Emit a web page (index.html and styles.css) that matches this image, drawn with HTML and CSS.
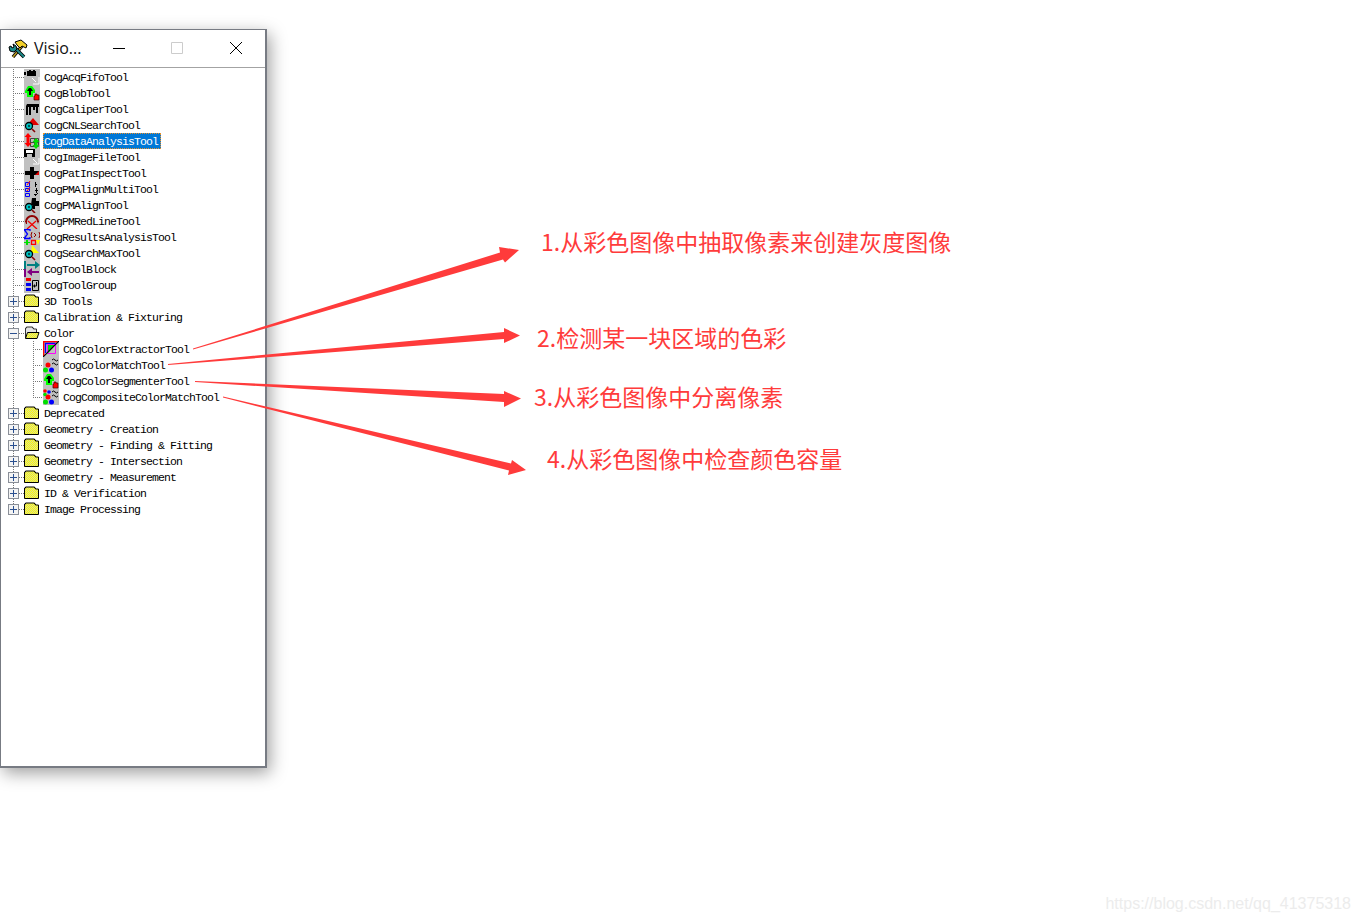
FILE: index.html
```html
<!DOCTYPE html>
<html lang="zh-CN">
<head>
  <meta charset="UTF-8" />
  <title>VisionPro Toolbox</title>
  <link rel="stylesheet" href="styles.css">
</head>
<body>
  <!-- Icon sheet -->
  <svg class="sheet" width="0" height="0">
    <defs>
      <pattern id="dither" width="2" height="2" patternUnits="userSpaceOnUse">
        <rect width="2" height="2" fill="#ffff00"/>
        <rect width="1" height="1" fill="#d8d8a0"/>
        <rect x="1" y="1" width="1" height="1" fill="#d8d8a0"/>
      </pattern>
      <symbol id="i-folder" viewBox="0 0 16 16">
        <path d="M.500 4V3h1V2h9v1h1v1h3v9.500H.500z" fill="url(#dither)" stroke="#000"/>
      </symbol>
      <symbol id="i-open" viewBox="0 0 16 16">
        <path d="M1.500 13V3h1V2h6v1h1v1h3v3" fill="#e4e4e4" stroke="#333"/>
        <path d="M1.500 13.500l2-6h11.500l-2 6z" fill="url(#dither)" stroke="#000"/>
      </symbol>
      <symbol id="i-acq" viewBox="0 0 16 16">
        <rect x="0" y="3" width="2" height="3" fill="#000"/>
        <rect x="3" y="2" width="9" height="5" fill="#000"/>
        <rect x="5" y="1" width="2" height="1" fill="#000"/>
        <rect x="9" y="1" width="2" height="1" fill="#000"/>
        <path d="M8 9l4 4M15 8v7H9" fill="none" stroke="#fff"/>
      </symbol>
      <symbol id="i-blob" viewBox="0 0 16 16">
        <path d="M1 6l3-5h4l3 4v3H9v4H3V8H1z" fill="#00ff00"/>
        <path d="M3 6l2-3h2l2 3H7v4H5V6z" fill="#000"/>
        <path d="M11 9h2v1h2v5h-5v-4h1z" fill="#f00" stroke="#400" stroke-width=".7"/>
      </symbol>
      <symbol id="i-caliper" viewBox="0 0 16 16">
        <path d="M3 3h12v3h-1v6h-2V6h-1v3H9V6H7v8H5V6H4v8H2V5z" fill="#000"/>
      </symbol>
      <symbol id="i-cnl" viewBox="0 0 16 16">
        <path d="M4 7l5-6 6 7H9z" fill="#e00000"/>
        <circle cx="5" cy="9" r="3.500" fill="#00c8c8" stroke="#000" stroke-width="1.300"/>
        <path d="M8 12l3 3" stroke="#800" stroke-width="1.600"/>
        <circle cx="5" cy="9" r="1.200" fill="#005050"/>
      </symbol>
      <symbol id="i-data" viewBox="0 0 16 16">
        <path d="M6.500 5.500h8v8h-8zM6.500 9.500h8M10.500 5.500v8" fill="none" stroke="#444"/>
        <path d="M4 0l3.500 4H5.500v6H7.500L4 14 .500 10H2.500V4H.500z" fill="#f00"/>
        <path d="M12 5l3.500 4H13.500v3h2L12 16 8.500 12h2V9h-2z" fill="#00e000"/>
      </symbol>
      <symbol id="i-file" viewBox="0 0 16 16">
        <path d="M0 0h11v8H0z" fill="#000"/>
        <rect x="2" y="1" width="7" height="3" fill="#fff"/>
        <rect x="3" y="5" width="5" height="3" fill="#c0c0c0"/>
        <path d="M9 10l4 4M15 9v6H9" fill="none" stroke="#fff"/>
      </symbol>
      <symbol id="i-pat" viewBox="0 0 16 16">
        <path d="M6 2h4v4h5v4h-5v4H6v-4H1V6h5z" fill="#000"/>
        <path d="M15 6v4h-4z" fill="#e00000"/>
      </symbol>
      <symbol id="i-multi" viewBox="0 0 16 16">
        <path d="M1.500 1.500h4v4h-4zM1.500 7.500h4v3h-4zM1.500 12.500h4v3h-4z" fill="none" stroke="#00f"/>
        <path d="M3 4l3-4M3 10l3-4" stroke="#f00"/>
        <path d="M11 3h2v1h-2zM11 1h1v5h-1zM11 9h3v1h-3zM12 7h1v5h-1zM10 13h3v1h-3z" fill="#000"/>
        <path d="M11 15l3-3" stroke="#000"/>
      </symbol>
      <symbol id="i-pm" viewBox="0 0 16 16">
        <circle cx="5" cy="10" r="3.500" fill="#00d0d0" stroke="#000" stroke-width="1.300"/>
        <path d="M8 13l3 3" stroke="#800" stroke-width="1.600"/>
        <path d="M8 1h4v3h3v5h-4v3H9V8H7z" fill="#000"/>
        <circle cx="5" cy="10" r="1.200" fill="#005050"/>
      </symbol>
      <symbol id="i-red" viewBox="0 0 16 16">
        <path d="M2 9a6 6 0 1 1 12 0" fill="none" stroke="#900000" stroke-width="2"/>
        <path d="M3 16L12 8M4 8l9 8" stroke="#f00000" stroke-width="1.300"/>
        <path d="M1 8h2v3h-1zM13 8h2l-1 3z" fill="#900000"/>
      </symbol>
      <symbol id="i-results" viewBox="0 0 16 16">
        <path d="M6 2V.500H.500v.500l3 4-3 4v.500H6V8" fill="none" stroke="#00f" stroke-width="1.300"/>
        <path d="M8 3L7 6l1 3M15 3l1 3-1 3M10 4l2 2-2 2" fill="none" stroke="#900000"/>
        <path d="M2 11h2v2h2v1H4v2H2v-2H0v-1h2z" fill="#00e000"/>
        <path d="M7.500 11.500h4v4h-4z" fill="none" stroke="#f00" stroke-width="1.300"/>
        <path d="M12 11h4l-2 5z" fill="#ff0"/>
      </symbol>
      <symbol id="i-max" viewBox="0 0 16 16">
        <path d="M8 0l7 8H7z" fill="#ff0"/>
        <circle cx="5" cy="9" r="3.500" fill="#00c8c8" stroke="#000" stroke-width="1.300"/>
        <path d="M8 12l3 3" stroke="#800" stroke-width="1.600"/>
        <circle cx="5" cy="9" r="1.200" fill="#005050"/>
      </symbol>
      <symbol id="i-block" viewBox="0 0 16 16">
        <rect x="0" y="0" width="2" height="8" fill="#008080"/>
        <path d="M3 3h8V0l5 4-5 4V5H3z" fill="#008080"/>
        <rect x="0" y="8" width="2" height="8" fill="#800080"/>
        <path d="M15 10H8V7l-5 4 5 4v-3h7z" fill="#800080"/>
      </symbol>
      <symbol id="i-group" viewBox="0 0 16 16">
        <rect x="2" y="1" width="5" height="3" fill="#f00000"/>
        <rect x="2" y="6" width="5" height="3" fill="#0000f0"/>
        <rect x="2" y="11" width="5" height="3" fill="#0000f0"/>
        <path d="M8.500 3.500h6v10h-6zM12.500 5v4H10" fill="none" stroke="#000"/>
        <path d="M11 7v4L9 9z" fill="#000"/>
      </symbol>
      <symbol id="i-extract" viewBox="0 0 16 16">
        <path d="M.700 15V.700h14" fill="none" stroke="#f00" stroke-width="1.400"/>
        <path d="M2.500 12V2.500h10" fill="none" stroke="#00f" stroke-width="1.400"/>
        <path d="M4.500 3.500h8v9h-8z" fill="#c0c0c0" stroke="#f0f"/>
        <path d="M5 12L12 4H5z" fill="#00e000"/>
        <path d="M0 16L16 0" stroke="#000" stroke-width="1.200"/>
      </symbol>
      <symbol id="i-match" viewBox="0 0 16 16">
        <path d="M9 3q1.500-2 3 0t3 0M9 7q1.500-2 3 0t3 0" fill="none" stroke="#000"/>
        <circle cx="5" cy="8" r="2.500" fill="#f00"/>
        <circle cx="2.500" cy="13" r="2.500" fill="#00e000"/>
        <circle cx="8.500" cy="13" r="2.500" fill="#00f"/>
      </symbol>
      <symbol id="i-seg" viewBox="0 0 16 16">
        <path d="M1 6l3-5h4l3 4v3H9v4H3V8H1z" fill="#00ff00"/>
        <path d="M3 6l2-3h2l2 3H7v4H5V6z" fill="#000"/>
        <path d="M11 9h2v1h2v5h-5v-4h1z" fill="#f00" stroke="#400" stroke-width=".7"/>
      </symbol>
      <symbol id="i-comp" viewBox="0 0 16 16">
        <circle cx="2" cy="2" r="1.800" fill="#f00"/>
        <circle cx="6" cy="3" r="1.800" fill="#00f"/>
        <circle cx="2" cy="5.500" r="1.800" fill="#00e000"/>
        <path d="M9 3q1.500-2 3 0t3 0M9 7q1.500-2 3 0t3 0" fill="none" stroke="#000"/>
        <circle cx="5" cy="8" r="2.500" fill="#f00"/>
        <circle cx="2.500" cy="13" r="2.500" fill="#00e000"/>
        <circle cx="8.500" cy="13" r="2.500" fill="#00f"/>
      </symbol>
    </defs>
  </svg>

  <!-- Tool window -->
  <div class="window">
    <div class="titlebar">
      <svg class="app-icon" width="20" height="20" viewBox="0 0 20 20">
        <path d="M5 18L14 7" stroke="#000" stroke-width="3.400"/>
        <path d="M5 18L14 7" stroke="#b89a20" stroke-width="1.600"/>
        <path d="M7 3l6-2 6 5-1 3-4-2-2 2-3-3z" fill="#f2cf2a" stroke="#000" stroke-width="1"/>
        <path d="M16 18L6 8" stroke="#000" stroke-width="3.600"/>
        <path d="M16 18L6 8" stroke="#1c8c8c" stroke-width="1.800"/>
        <path d="M1 8l2-1 1 2 2-1-1-3 3 2 1 3-3 3-4-1z" fill="#1c8c8c" stroke="#000" stroke-width="1"/>
      </svg>
      <span class="app-name">Visio...</span>
      <div class="win-buttons">
        <span class="win-btn"><svg width="14" height="14" viewBox="0 0 14 14"><path d="M1 6.500h12" stroke="#000"/></svg></span>
        <span class="win-btn"><svg width="14" height="14" viewBox="0 0 14 14"><path d="M1.500 .500h11v11h-11z" fill="none" stroke="#ccc"/></svg></span>
        <span class="win-btn"><svg width="14" height="14" viewBox="0 0 14 14"><path d="M1 0l12 12M13 0L1 12" stroke="#000"/></svg></span>
      </div>
    </div>

    <div class="tree">
      <div class="row"><span class="gut leaf"></span><svg class="ico tool"><use href="#i-acq"/></svg><span class="label">CogAcqFifoTool</span></div>
      <div class="row"><span class="gut leaf"></span><svg class="ico tool"><use href="#i-blob"/></svg><span class="label">CogBlobTool</span></div>
      <div class="row"><span class="gut leaf"></span><svg class="ico tool"><use href="#i-caliper"/></svg><span class="label">CogCaliperTool</span></div>
      <div class="row"><span class="gut leaf"></span><svg class="ico tool"><use href="#i-cnl"/></svg><span class="label">CogCNLSearchTool</span></div>
      <div class="row"><span class="gut leaf"></span><svg class="ico tool"><use href="#i-data"/></svg><span class="label selected">CogDataAnalysisTool</span></div>
      <div class="row"><span class="gut leaf"></span><svg class="ico tool"><use href="#i-file"/></svg><span class="label">CogImageFileTool</span></div>
      <div class="row"><span class="gut leaf"></span><svg class="ico tool"><use href="#i-pat"/></svg><span class="label">CogPatInspectTool</span></div>
      <div class="row"><span class="gut leaf"></span><svg class="ico tool"><use href="#i-multi"/></svg><span class="label">CogPMAlignMultiTool</span></div>
      <div class="row"><span class="gut leaf"></span><svg class="ico tool"><use href="#i-pm"/></svg><span class="label">CogPMAlignTool</span></div>
      <div class="row"><span class="gut leaf"></span><svg class="ico tool"><use href="#i-red"/></svg><span class="label">CogPMRedLineTool</span></div>
      <div class="row"><span class="gut leaf"></span><svg class="ico tool"><use href="#i-results"/></svg><span class="label">CogResultsAnalysisTool</span></div>
      <div class="row"><span class="gut leaf"></span><svg class="ico tool"><use href="#i-max"/></svg><span class="label">CogSearchMaxTool</span></div>
      <div class="row"><span class="gut leaf"></span><svg class="ico tool"><use href="#i-block"/></svg><span class="label">CogToolBlock</span></div>
      <div class="row"><span class="gut leaf"></span><svg class="ico tool"><use href="#i-group"/></svg><span class="label">CogToolGroup</span></div>

      <div class="row"><span class="gut leaf"><span class="box plus"></span></span><svg class="ico"><use href="#i-folder"/></svg><span class="label">3D Tools</span></div>
      <div class="row"><span class="gut leaf"><span class="box plus"></span></span><svg class="ico"><use href="#i-folder"/></svg><span class="label">Calibration &amp; Fixturing</span></div>
      <div class="row"><span class="gut leaf"><span class="box"></span></span><svg class="ico"><use href="#i-open"/></svg><span class="label">Color</span></div>

      <!-- Color group children -->
      <div class="row"><span class="gut pass"></span><span class="gut2"></span><svg class="ico tool"><use href="#i-extract"/></svg><span class="label">CogColorExtractorTool</span></div>
      <div class="row"><span class="gut pass"></span><span class="gut2"></span><svg class="ico tool"><use href="#i-match"/></svg><span class="label">CogColorMatchTool</span></div>
      <div class="row"><span class="gut pass"></span><span class="gut2"></span><svg class="ico tool"><use href="#i-seg"/></svg><span class="label">CogColorSegmenterTool</span></div>
      <div class="row"><span class="gut pass"></span><span class="gut2 end"></span><svg class="ico tool"><use href="#i-comp"/></svg><span class="label">CogCompositeColorMatchTool</span></div>

      <div class="row"><span class="gut leaf"><span class="box plus"></span></span><svg class="ico"><use href="#i-folder"/></svg><span class="label">Deprecated</span></div>
      <div class="row"><span class="gut leaf"><span class="box plus"></span></span><svg class="ico"><use href="#i-folder"/></svg><span class="label">Geometry - Creation</span></div>
      <div class="row"><span class="gut leaf"><span class="box plus"></span></span><svg class="ico"><use href="#i-folder"/></svg><span class="label">Geometry - Finding &amp; Fitting</span></div>
      <div class="row"><span class="gut leaf"><span class="box plus"></span></span><svg class="ico"><use href="#i-folder"/></svg><span class="label">Geometry - Intersection</span></div>
      <div class="row"><span class="gut leaf"><span class="box plus"></span></span><svg class="ico"><use href="#i-folder"/></svg><span class="label">Geometry - Measurement</span></div>
      <div class="row"><span class="gut leaf"><span class="box plus"></span></span><svg class="ico"><use href="#i-folder"/></svg><span class="label">ID &amp; Verification</span></div>
      <div class="row"><span class="gut leaf last"><span class="box plus"></span></span><svg class="ico"><use href="#i-folder"/></svg><span class="label">Image Processing</span></div>
    </div>
  </div>

  <!-- Annotations drawn over the screenshot -->
  <svg class="arrows" width="1360" height="922" viewBox="0 0 1360 922">
    <polygon points="193,348.600 500,252.500 499,247 519,250 505,262.500 503,259.500 193,349.600"/>
    <polygon points="168,364 504,332 504,328 520,335.500 504,343 504,339 168,365"/>
    <polygon points="195,381 504,394 504,391 521,398.500 504,407 504,402 195,382"/>
    <polygon points="223,396.500 511,463.500 512,460 526,470 508,475 509,470.500 223,397.500"/>
  </svg>
  <div class="note note-1">1.从彩色图像中抽取像素来创建灰度图像</div>
  <div class="note note-2">2.检测某一块区域的色彩</div>
  <div class="note note-3">3.从彩色图像中分离像素</div>
  <div class="note note-4">4.从彩色图像中检查颜色容量</div>

  <div class="watermark">https://blog.csdn.net/qq_41375318</div>
</body>
</html>
```

FILE: styles.css
```css
/* General styles */
body {
  margin: 0;
  height: 922px;
  overflow: hidden;
  background-color: #fff;
  position: relative;
}
.sheet {
  position: absolute;
}
/* Tool window */
.window {
  box-sizing: border-box;
  width: 267px;
  height: 739px;
  margin-top: 29px;
  background-color: #fff;
  border: solid #777b83;
  border-width: 1px 2px 2px 1px;
  box-shadow: 3px 5px 16px rgba(0, 0, 0, 0.38);
}
.titlebar {
  display: flex;
  align-items: center;
  height: 37px;
  padding-left: 7px;
  border-bottom: 1px solid #a3a3a3;
}
.app-icon {
  flex: none;
}
.app-name {
  margin-left: 6px;
  margin-bottom: 2px;
  font-family: "Open Sans", sans-serif;
  font-size: 16px;
  color: #111;
}
.win-buttons {
  display: flex;
  margin-left: auto;
}
.win-btn {
  display: flex;
  align-items: center;
  justify-content: center;
  width: 58.500px;
  height: 37px;
}
/* Tree */
.tree {
  padding: 1px 0 0 7px;
}
.row {
  display: flex;
  height: 16px;
  font-family: "Liberation Mono", monospace;
  font-size: 11.500px;
  letter-spacing: -0.900px;
  line-height: 18px;
  color: #000;
}
.ico {
  flex: none;
  width: 16px;
  height: 16px;
}
.ico.tool {
  background-color: #c0c0c0;
}
.label {
  margin-left: 3px;
  padding: 0 1px;
  white-space: nowrap;
}
.label.selected {
  box-sizing: border-box;
  height: 16px;
  padding: 0;
  width: 118px;
  background-color: #0078d7;
  color: #fff;
  outline: 1px dotted #e8912c;
  outline-offset: -1px;
  padding-left: 1px;
}
/* Dotted tree lines */
.gut,
.gut2 {
  flex: none;
  display: block;
  height: 16px;
  background-repeat: no-repeat;
}
.gut {
  width: 16px;
}
.gut.leaf {
  background-image:
    repeating-linear-gradient(180deg, #777 0 1px, transparent 1px 2px),
    repeating-linear-gradient(90deg, #777 0 1px, transparent 1px 2px);
  background-size: 1px 16px, 11px 1px;
  background-position: 5px 0, 5px 8px;
}
.gut.pass {
  background-image: repeating-linear-gradient(180deg, #777 0 1px, transparent 1px 2px);
  background-size: 1px 16px;
  background-position: 5px 0;
}
.gut.leaf.last {
  background-size: 1px 8px, 11px 1px;
}
.gut2 {
  width: 19px;
  background-image:
    repeating-linear-gradient(180deg, #777 0 1px, transparent 1px 2px),
    repeating-linear-gradient(90deg, #777 0 1px, transparent 1px 2px);
  background-size: 1px 16px, 10px 1px;
  background-position: 9px 0, 9px 8px;
}
.gut2.end {
  background-size: 1px 8px, 10px 1px;
}
.box {
  box-sizing: border-box;
  display: block;
  width: 11px;
  height: 11px;
  margin-top: 3px;
  border: 1px solid #8a8f98;
  background:
    linear-gradient(#2a4f8f, #2a4f8f) center / 7px 1px no-repeat,
    #f4f4f4;
}
.box.plus {
  background:
    linear-gradient(#2a4f8f, #2a4f8f) center / 7px 1px no-repeat,
    linear-gradient(#2a4f8f, #2a4f8f) center / 1px 7px no-repeat,
    #f4f4f4;
}
/* Red annotations */
.arrows {
  position: absolute;
  top: 0;
  left: 0;
  pointer-events: none;
}
.arrows polygon {
  fill: #ff3b3b;
}
.note {
  position: absolute;
  font-family: "Noto Sans CJK SC", "Liberation Sans", sans-serif;
  font-size: 23px;
  line-height: 30px;
  color: #ff3b3b;
  white-space: nowrap;
}
.note-1 { left: 541px; top: 226px; }
.note-2 { left: 537px; top: 322px; }
.note-3 { left: 534px; top: 381px; }
.note-4 { left: 547px; top: 443px; }
/* Faint blog watermark */
.watermark {
  position: absolute;
  right: 9px;
  top: 894px;
  font-family: "Liberation Sans", sans-serif;
  font-size: 16px;
  line-height: 20px;
  color: #ececec;
}
```
